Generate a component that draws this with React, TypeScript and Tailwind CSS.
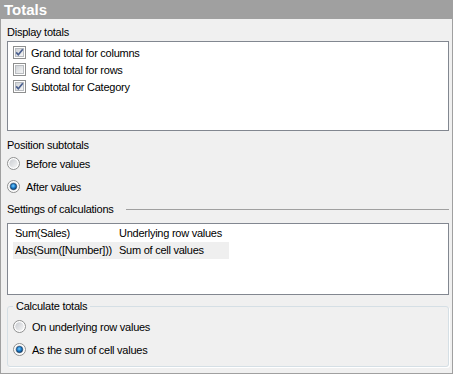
import React from "react";

function CheckBox({ checked }: { checked: boolean }) {
  return (
    <svg width="13" height="13" viewBox="0 0 13 13" className="shrink-0">
      <defs>
        <linearGradient id="cbg" x1="0" y1="0" x2="1" y2="1">
          <stop offset="0" stopColor="#cdd1d6" />
          <stop offset="1" stopColor="#f7f7f7" />
        </linearGradient>
      </defs>
      <rect x="0.5" y="0.5" width="12" height="12" fill="#ffffff" stroke="#8e8f8f" />
      <rect x="2.5" y="2.5" width="8" height="8" fill="url(#cbg)" stroke="#b9bcc0" />
      {checked && (
        <path d="M3.2 6.4 L5.3 8.8 L9.8 3.2" fill="none" stroke="#4a5f8f" strokeWidth="1.7" />
      )}
    </svg>
  );
}

function Radio({ checked }: { checked: boolean }) {
  return (
    <svg width="13" height="13" viewBox="0 0 13 13" className="shrink-0">
      <defs>
        <linearGradient id="rbg" x1="0" y1="0" x2="1" y2="1">
          <stop offset="0" stopColor="#c9ccd1" />
          <stop offset="1" stopColor="#f6f6f6" />
        </linearGradient>
        <radialGradient id="rdot" cx="0.45" cy="0.4" r="0.6">
          <stop offset="0" stopColor="#7ad0ff" />
          <stop offset="0.55" stopColor="#1a7ccc" />
          <stop offset="1" stopColor="#0d3d6b" />
        </radialGradient>
      </defs>
      <circle cx="6.5" cy="6.5" r="6" fill="#ffffff" stroke="#8e8f8f" />
      <circle cx="6.5" cy="6.5" r="4.3" fill="url(#rbg)" />
      {checked && <circle cx="6.5" cy="6.5" r="3.2" fill="url(#rdot)" stroke="#1b3d62" strokeWidth="0.6" />}
    </svg>
  );
}

export default function App() {
  return (
    <div className="w-[453px] h-[374px] flex flex-col bg-[#f0f0f0] text-black text-[11px] leading-[14px] tracking-[-0.25px] font-['Liberation_Sans',Arial,sans-serif]">
      <div className="h-[19px] shrink-0 bg-[#a0a0a0] pl-[4px] text-white font-bold text-[15px] leading-[19px] tracking-normal">
        Totals
      </div>
      <div className="flex-1 flex flex-col border-x border-b border-[#a0a0a0] pl-[6px] pr-[3px]">
        <div className="mt-[6px] h-[14px]">Display totals</div>
        <div className="mt-[2px] h-[90px] border border-[#828790] bg-white pt-[2px] pl-[5px]">
          {[
            { label: "Grand total for columns", checked: true },
            { label: "Grand total for rows", checked: false },
            { label: "Subtotal for Category", checked: true },
          ].map((it) => (
            <div key={it.label} className="h-[17px] flex items-center gap-[5px]">
              <CheckBox checked={it.checked} />
              <span>{it.label}</span>
            </div>
          ))}
        </div>

        <div className="mt-[7px] h-[14px]">Position subtotals</div>
        <div className="flex flex-col">
          <div className="h-[23px] flex items-center gap-[6px]">
            <Radio checked={false} />
            <span>Before values</span>
          </div>
          <div className="h-[23px] flex items-center gap-[6px]">
            <Radio checked={true} />
            <span>After values</span>
          </div>
        </div>

        <div className="mt-[4px] h-[14px] flex items-center gap-[12px]">
          <span className="shrink-0">Settings of calculations</span>
          <div className="flex-1 h-px bg-[#a0a0a0]" />
        </div>
        <div className="mt-[7px] h-[72px] border border-[#828790] bg-white pt-[1px] pl-[5px]">
          <div className="h-[17px] w-[216px] flex items-center leading-[17px]">
            <span className="w-[106px] pl-[2px]">Sum(Sales)</span>
            <span>Underlying row values</span>
          </div>
          <div className="h-[17px] w-[216px] flex items-center bg-[#efefef] leading-[17px]">
            <span className="w-[106px] pl-[2px]">Abs(Sum([Number]))</span>
            <span>Sum of cell values</span>
          </div>
        </div>

        <div className="relative mt-[11px] h-[61px] rounded-[3px] border border-[#d5dfe5] shadow-[1px_1px_0_#ffffff] pt-[8px] pl-[5px]">
          <div className="absolute left-[5px] top-[-8px] h-[14px] px-[3px] bg-[#f0f0f0]">Calculate totals</div>
          <div className="h-[23px] flex items-center gap-[6px]">
            <Radio checked={false} />
            <span>On underlying row values</span>
          </div>
          <div className="h-[23px] flex items-center gap-[6px]">
            <Radio checked={true} />
            <span>As the sum of cell values</span>
          </div>
        </div>
      </div>
    </div>
  );
}
